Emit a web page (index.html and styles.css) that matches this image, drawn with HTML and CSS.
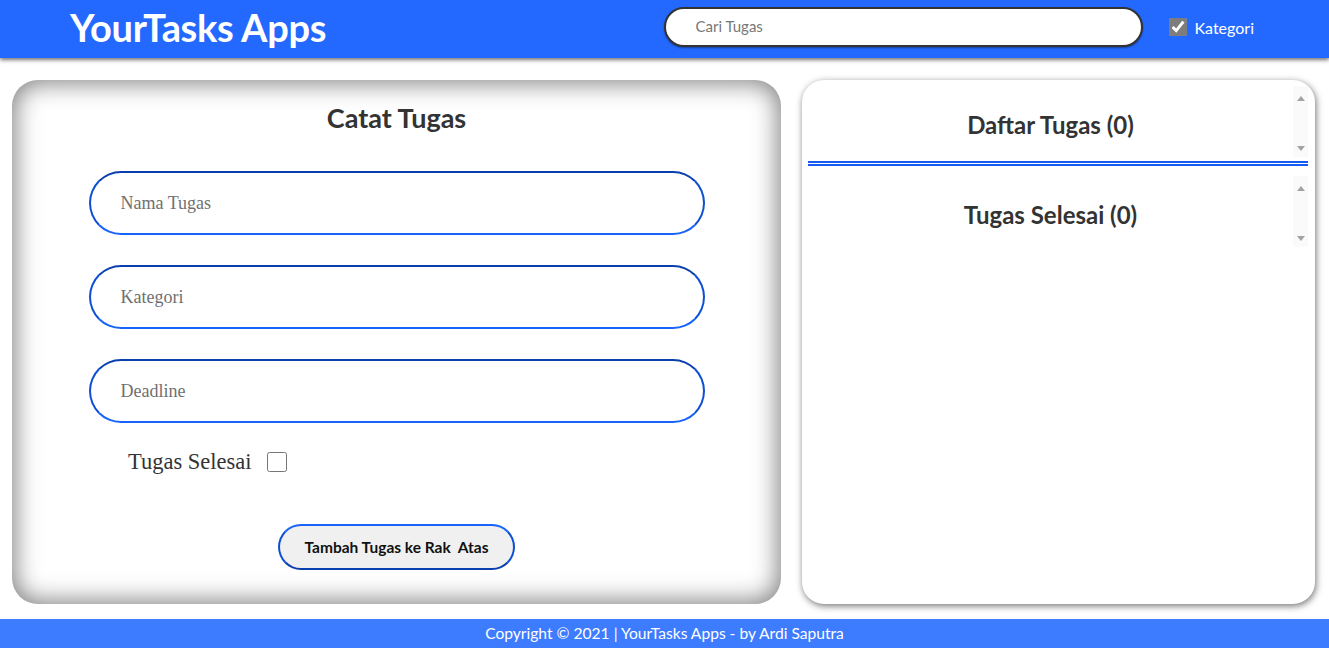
FILE: index.html
```html
<!DOCTYPE html>
<html lang="id">
<head>
<meta charset="utf-8">
<title>YourTasks Apps</title>
<link rel="stylesheet" href="styles.css">
</head>
<body>
<header class="topbar">
  <h1 class="brand">YourTasks Apps</h1>
  <div class="search-area">
    <input class="search" type="text" placeholder="Cari Tugas">
    <label class="cat-toggle"><input type="checkbox" checked class="cat-check"><span>Kategori</span></label>
  </div>
</header>
<main class="main">
  <section class="card form-card">
    <h2 class="form-title">Catat Tugas</h2>
    <form class="task-form">
      <input class="field" type="text" placeholder="Nama Tugas">
      <input class="field" type="text" placeholder="Kategori">
      <input class="field" type="text" placeholder="Deadline">
      <label class="done-row"><span>Tugas Selesai</span><input type="checkbox" class="done-check"></label>
      <button type="button" class="submit">Tambah Tugas ke Rak&nbsp; Atas</button>
    </form>
  </section>
  <section class="card list-card">
    <div class="shelf">
      <div class="shelf-body">
        <h3 class="shelf-title">Daftar Tugas (0)</h3>
      </div>
      <div class="rail" aria-hidden="true"><span class="arrow-up"></span><span class="arrow-down"></span></div>
    </div>
    <div class="divider"></div>
    <div class="shelf">
      <div class="shelf-body">
        <h3 class="shelf-title">Tugas Selesai (0)</h3>
      </div>
      <div class="rail" aria-hidden="true"><span class="arrow-up"></span><span class="arrow-down"></span></div>
    </div>
  </section>
</main>
<footer class="footer">Copyright © 2021 | YourTasks Apps - by Ardi Saputra</footer>
</body>
</html>
```
FILE: styles.css
```css
* { box-sizing: border-box; }
html, body { margin: 0; padding: 0; }
body {
  font-family: Lato, "Open Sans", sans-serif;
  background: #fff;
  color: #333;
  width: 1329px;
  height: 648px;
  overflow: hidden;
}
.topbar {
  height: 58px;
  background: #2469ff;
  display: flex;
  align-items: center;
  padding-left: 70px;
  box-shadow: 0 2px 4px rgba(0,0,0,0.55);
  position: relative;
  z-index: 2;
}
.brand {
  margin: 0;
  color: #fff;
  font-size: 38px;
  font-weight: 700;
  letter-spacing: -0.3px;
  line-height: 42px;
  padding-bottom: 4px;
}
.search-area {
  margin-left: auto;
  align-self: flex-start;
  padding-top: 7px;
  display: flex;
  align-items: center;
  padding-right: 75px;
}
.search {
  width: 479px;
  height: 40px;
  border: 2px solid #333;
  border-radius: 20px;
  background: #fff;
  padding: 0 0 2px 30px;
  font-family: Lato, sans-serif;
  font-size: 15px;
  color: #333;
  outline: none;
  box-shadow: 0 1px 2px rgba(0,0,0,0.4);
}
.search::placeholder { color: #777; }
.cat-toggle {
  display: flex;
  align-items: center;
  margin-left: 26px;
  color: #fff;
  font-size: 16px;
  gap: 8px;
}
.cat-check {
  width: 18px;
  height: 18px;
  margin: 0;
  accent-color: #7d7d7d;
}
.main {
  display: flex;
  gap: 21px;
  padding: 22px 14px 15px 12px;
  height: 561px;
}
.card {
  height: 524px;
  background: #fff;
}
.form-card {
  width: 769px;
  border-radius: 26px;
  box-shadow: inset 0 0 24px 3px rgba(0,0,0,0.5);
  padding-top: 22px;
}
.form-title {
  margin: 0;
  text-align: center;
  font-size: 27px;
  line-height: 32px;
  font-weight: 700;
  color: #333;
}
.task-form {
  display: flex;
  flex-direction: column;
  align-items: center;
  margin-top: 37px;
}
.field {
  width: 616px;
  height: 64px;
  border: 2px solid;
  border-color: #0a3fae #0d4fd3 #1763fb #0d4fd3;
  border-radius: 32px;
  padding: 0 0 0 30px;
  margin-bottom: 30px;
  font-family: "Liberation Serif", serif;
  font-size: 18px;
  color: #333;
  outline: none;
  background: #fff;
}
.field::placeholder { color: #707070; }
.field:nth-of-type(3) { margin-bottom: 24px; }
.done-row {
  align-self: flex-start;
  margin-left: 116px;
  display: flex;
  align-items: center;
  height: 30px;
  gap: 15px;
  font-family: "Liberation Serif", serif;
  font-size: 22.5px;
  color: #333;
}
.done-check {
  width: 20px;
  height: 20px;
  margin: 0;
}
.submit {
  margin-top: 47px;
  width: 237px;
  height: 46px;
  border-radius: 23px;
  border: 2px solid;
  border-color: #1763fb #0d4fd3 #0a3fae #0d4fd3;
  background: #f0f0f0;
  font-family: Lato, sans-serif;
  font-weight: 700;
  font-size: 15.5px;
  color: #111;
  padding: 0;
}
.list-card {
  width: 513px;
  border-radius: 22px;
  box-shadow: 1px 2px 7px rgba(0,0,0,0.55);
  padding: 6px 7px 0 6px;
}
.shelf {
  height: 71px;
  display: flex;
}
.shelf-body {
  flex: 1;
  overflow: hidden;
}
.rail {
  width: 15px;
  background: #fafafa;
  display: flex;
  flex-direction: column;
  justify-content: space-between;
  align-items: center;
  padding: 10px 0 6px;
}
.arrow-up {
  width: 0;
  height: 0;
  border-left: 4px solid transparent;
  border-right: 4px solid transparent;
  border-bottom: 5px solid #a3a3a3;
}
.arrow-down {
  width: 0;
  height: 0;
  border-left: 4px solid transparent;
  border-right: 4px solid transparent;
  border-top: 5px solid #a3a3a3;
}
.shelf-title {
  margin: 0;
  padding-top: 25px;
  text-align: center;
  font-size: 24px;
  line-height: 28px;
  font-weight: 700;
  color: #333;
}
.divider {
  margin-top: 4px;
  border-bottom: 5px double #1459f2;
  margin-bottom: 10px;
}
.footer {
  height: 29px;
  background: #3d7bff;
  color: #fff;
  font-size: 15.6px;
  text-align: center;
  line-height: 29px;
}
```
